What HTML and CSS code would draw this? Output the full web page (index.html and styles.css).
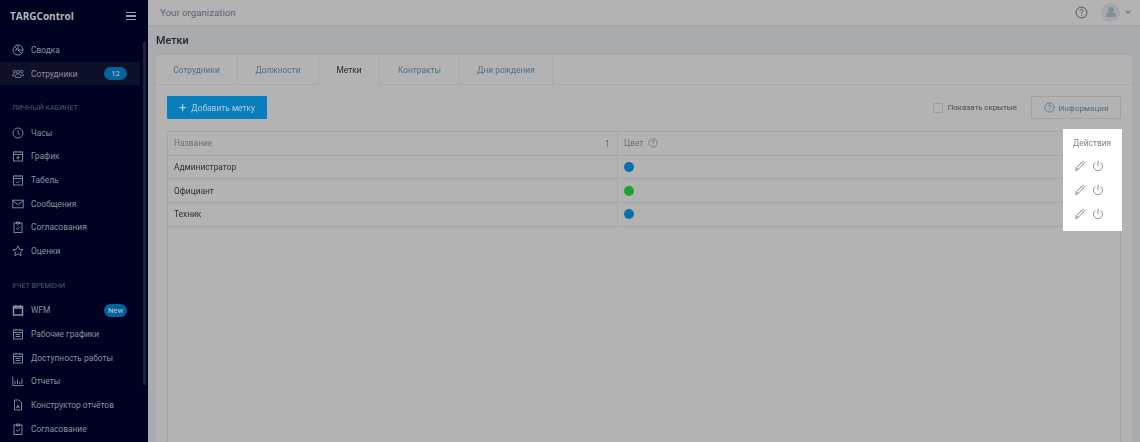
FILE: index.html
```html
<!DOCTYPE html>
<html lang="en">
<head>
    <meta charset="UTF-8">
    <title>TARGControl - Метки</title>
    <link rel="stylesheet" href="styles.css">
</head>
<body>
    <svg class="sprite" width="0" height="0">
        <symbol id="i-pie" viewBox="0 0 12 12"><circle cx="6" cy="6" r="5"/><path d="M6 1v5l3.500 3.500M6 6h5M3 3l2 2-2 2"/></symbol>
        <symbol id="i-team" viewBox="0 0 14 12"><circle cx="7" cy="3.500" r="1.800"/><circle cx="2.800" cy="3" r="1.400"/><circle cx="11.200" cy="3" r="1.400"/><path d="M3.800 10V8c0-1 1-2 3.200-2s3.200 1 3.200 2v2zM3 5.500C1.500 5.500.5 6.500.5 8h2.500M11 5.500c1.500 0 2.500 1 2.500 2.500H11"/></symbol>
        <symbol id="i-clock" viewBox="0 0 12 12"><circle cx="6" cy="6" r="5"/><path d="M6 3v3.200l2 1.300"/></symbol>
        <symbol id="i-cal-plus" viewBox="0 0 12 12"><rect x="1.500" y="2" width="9" height="9"/><path d="M1.500 4.500h9M4 .8v2M8 .8v2M6 6v3.500M4.300 7.700h3.400"/></symbol>
        <symbol id="i-cal-check" viewBox="0 0 12 12"><rect x="1.500" y="2" width="9" height="9"/><path d="M1.500 4.500h9M4 .8v2M8 .8v2M4 7.500l1.500 1.500 2.700-2.700"/></symbol>
        <symbol id="i-mail" viewBox="0 0 12 12"><rect x=".8" y="2.200" width="10.400" height="7.600"/><path d="M.8 3l5.200 3.500L11.200 3"/></symbol>
        <symbol id="i-clip" viewBox="0 0 12 12"><rect x="2" y="2" width="8" height="9.500"/><path d="M4.500 1h3v2h-3zM4 7l1.500 1.500L8 5.700"/></symbol>
        <symbol id="i-star" viewBox="0 0 12 12"><path d="M6 1l1.500 3.300 3.500.4-2.600 2.400.7 3.600L6 8.900l-3.100 1.800.7-3.600L1 4.700l3.500-.4z"/></symbol>
        <symbol id="i-cal" viewBox="0 0 12 12"><rect x="1.500" y="2.500" width="9" height="8.500" class="thick"/><path d="M1.500 4h9M4 1v2M8 1v2" class="thick"/></symbol>
        <symbol id="i-cal-lines" viewBox="0 0 12 12"><rect x="1.500" y="2" width="9" height="9"/><path d="M1.500 4.500h9M4 .8v2M8 .8v2M3.500 6.500h5M3.500 8.500h5"/></symbol>
        <symbol id="i-chart" viewBox="0 0 12 12"><path d="M.8 1.500V10.500h10.700M3 9V6M5.500 9V4.500M7.800 9V6.500M10 9V3.500"/></symbol>
        <symbol id="i-doc" viewBox="0 0 12 12"><path d="M2.500 1h4.500l2.500 2.500V11h-7zM4.500 9l1.300-3 1.300 3M5 8h1.600"/></symbol>
        <symbol id="i-help" viewBox="0 0 12 12"><circle cx="6" cy="6" r="5"/><path d="M4.500 4.700c0-2 3-2 3-.2 0 1.200-1.500 1.200-1.500 2.500M6 8.100v.8"/></symbol>
        <symbol id="i-pen" viewBox="0 0 12 12"><path d="M1.500 10.500l.7-2.700 6-6c.5-.5 1.300-.5 1.800 0s.5 1.300 0 1.800l-6 6zM7.300 2.700l2 2M2.200 7.800l2 2"/></symbol>
        <symbol id="i-power" viewBox="0 0 12 12"><path d="M3.500 2.500a4.500 4.500 0 1 0 5 0M6 .8V6"/></symbol>
    </svg>

    <div class="app">
        <aside class="sidebar">
            <div class="logo-row">
                <span class="logo">TARGControl</span>
                <span class="burger"><i></i><i></i><i></i></span>
            </div>
            <div class="scroll-thumb"></div>
            <nav class="nav">
                <a class="nav-item"><svg class="nav-icon"><use href="#i-pie"/></svg>Сводка</a>
                <a class="nav-item active"><svg class="nav-icon"><use href="#i-team"/></svg>Сотрудники<span class="pill">12</span></a>

                <div class="nav-title">ЛИЧНЫЙ КАБИНЕТ</div>
                <a class="nav-item"><svg class="nav-icon"><use href="#i-clock"/></svg>Часы</a>
                <a class="nav-item"><svg class="nav-icon"><use href="#i-cal-plus"/></svg>График</a>
                <a class="nav-item"><svg class="nav-icon"><use href="#i-cal-check"/></svg>Табель</a>
                <a class="nav-item"><svg class="nav-icon"><use href="#i-mail"/></svg>Сообщения</a>
                <a class="nav-item"><svg class="nav-icon"><use href="#i-clip"/></svg>Согласования</a>
                <a class="nav-item"><svg class="nav-icon"><use href="#i-star"/></svg>Оценки</a>

                <div class="nav-title">УЧЕТ ВРЕМЕНИ</div>
                <a class="nav-item"><svg class="nav-icon"><use href="#i-cal"/></svg>WFM<span class="pill">New</span></a>
                <a class="nav-item"><svg class="nav-icon"><use href="#i-cal-lines"/></svg>Рабочие графики</a>
                <a class="nav-item"><svg class="nav-icon"><use href="#i-cal-lines"/></svg>Доступность работы</a>
                <a class="nav-item"><svg class="nav-icon"><use href="#i-chart"/></svg>Отчеты</a>
                <a class="nav-item"><svg class="nav-icon"><use href="#i-doc"/></svg>Конструктор отчётов</a>
                <a class="nav-item"><svg class="nav-icon"><use href="#i-clip"/></svg>Согласование</a>
            </nav>
        </aside>

        <main class="main">
            <header class="topbar">
                <span class="org">Your organization</span>
                <div class="topbar-right">
                    <svg class="help-icon"><use href="#i-help"/></svg>
                    <span class="avatar"><span class="avatar-head"></span><span class="avatar-body"></span></span>
                    <svg class="chevron" viewBox="0 0 8 5"><path d="M1 1l3 3 3-3"/></svg>
                </div>
            </header>

            <section class="content">
                <h1 class="page-title">Метки</h1>
                <div class="card">
                    <div class="tabs">
                        <a class="tab t-staff">Сотрудники</a>
                        <a class="tab t-posts">Должности</a>
                        <a class="tab t-tags current">Метки</a>
                        <a class="tab t-contracts">Контракты</a>
                        <a class="tab t-birthdays">Дни рождения</a>
                    </div>
                    <div class="card-body">
                        <div class="toolbar">
                            <button class="btn-add"><span class="plus">+</span>Добавить метку</button>
                            <div class="toolbar-right">
                                <label class="check"><span class="box"></span>Показать скрытые</label>
                                <button class="btn-info"><svg class="info-icon"><use href="#i-help"/></svg>Информация</button>
                            </div>
                        </div>
                        <div class="table">
                            <div class="row head">
                                <div class="cell name">Название<span class="sort">↑</span></div>
                                <div class="cell color">Цвет<svg class="th-help"><use href="#i-help"/></svg></div>
                            </div>
                            <div class="row">
                                <div class="cell name">Администратор</div>
                                <div class="cell color"><span class="dot blue"></span></div>
                            </div>
                            <div class="row">
                                <div class="cell name">Официант</div>
                                <div class="cell color"><span class="dot green"></span></div>
                            </div>
                            <div class="row">
                                <div class="cell name">Техник</div>
                                <div class="cell color"><span class="dot blue"></span></div>
                            </div>
                        </div>
                    </div>
                </div>
            </section>
        </main>
    </div>

    <div class="spotlight">
        <div class="spot-head">Действия</div>
        <div class="spot-row"><svg><use href="#i-pen"/></svg><svg><use href="#i-power"/></svg></div>
        <div class="spot-row"><svg><use href="#i-pen"/></svg><svg><use href="#i-power"/></svg></div>
        <div class="spot-row"><svg><use href="#i-pen"/></svg><svg><use href="#i-power"/></svg></div>
    </div>
</body>
</html>
```

FILE: styles.css
```css
html, body {
    margin: 0;
    height: 442px;
    overflow: hidden;
}
body {
    font-family: Roboto, "Liberation Sans", sans-serif;
    font-size: 8.400px;
    background: #a9abaf;
    position: relative;
}
.sprite {
    position: absolute;
}
.app {
    display: flex;
    height: 442px;
    filter: blur(0.3px); /* the reference is a soft, scaled-down capture */
}

/* sidebar */
.sidebar {
    width: 148px;
    flex: none;
    background: #000222;
    color: #8d8e9f;
    position: relative;
}
.logo-row {
    height: 32px;
    display: flex;
    align-items: center;
    padding: 0 12px 0 10px;
    justify-content: space-between;
}
.logo {
    color: #b5b5bb;
    font-family: "Open Sans", sans-serif;
    font-size: 10px;
    font-weight: 700;
}
.burger {
    display: flex;
    flex-direction: column;
    gap: 2px;
    width: 10px;
}
.burger i {
    height: 1.500px;
    background: #9b9ca8;
}
.scroll-thumb {
    position: absolute;
    right: 2px;
    top: 41px;
    width: 3px;
    height: 344px;
    background: #1e2038;
    border-radius: 2px;
}
.nav {
    padding-top: 6px;
    width: 140px;
}
.nav-item {
    display: flex;
    align-items: center;
    height: 23.700px;
    padding-left: 12px;
    padding-right: 13px;
    box-sizing: border-box;
}
.nav-item.active {
    background: #0e1029;
}
.nav-icon {
    width: 12px;
    height: 12px;
    margin-right: 7px;
    flex: none;
}
.nav-icon, .help-icon, .info-icon, .th-help, .spot-row svg {
    fill: none;
    stroke: currentColor;
    stroke-width: 0.900;
}
.thick {
    stroke-width: 1.500;
}
.pill {
    margin-left: auto;
    width: 23px;
    height: 13px;
    border-radius: 7px;
    background: #05639c;
    color: #a0b8c8;
    font-size: 7.500px;
    font-weight: 500;
    display: flex;
    align-items: center;
    justify-content: center;
}
.nav-title {
    font-size: 7.200px;
    color: #54556a;
    padding-left: 12px;
    height: 11px;
    line-height: 11px;
    margin: 16.500px 0 8px;
}

/* top bar */
.main {
    flex: 1;
    min-width: 0;
    display: flex;
    flex-direction: column;
}
.topbar {
    height: 24px;
    background: #b3b3b3;
    border-bottom: 2px solid #a5a6a8;
    display: flex;
    align-items: center;
    justify-content: space-between;
    padding: 0 9px 1px 12px;
    flex: none;
    box-sizing: content-box;
}
.org {
    font-size: 9.700px;
    color: #5c6472;
}
.topbar-right {
    display: flex;
    align-items: center;
    color: #4b4f57;
}
.help-icon {
    width: 13px;
    height: 13px;
    margin-right: 13px;
}
.avatar {
    width: 19px;
    height: 19px;
    border-radius: 50%;
    background: #a6a8ac;
    display: flex;
    flex-direction: column;
    align-items: center;
    justify-content: center;
    margin-right: 5px;
}
.avatar-head {
    width: 6px;
    height: 6px;
    border-radius: 50%;
    background: #7f8d97;
}
.avatar-body {
    width: 10px;
    height: 4px;
    background: #7f8d97;
    border-radius: 2px 2px 0 0;
}
.chevron {
    width: 6px;
    height: 4px;
    fill: none;
    stroke: #3f4248;
    stroke-width: 1.200;
}

/* page */
.content {
    flex: 1;
    padding: 0 7px;
    min-height: 0;
}
.page-title {
    margin: 0;
    height: 27px;
    line-height: 28px;
    padding-left: 1px;
    font-size: 10.800px;
    font-weight: 500;
    color: #23262e;
}
.card {
    background: #b3b3b3;
    border: 1px solid #a8a9ab;
    height: 400px;
    box-sizing: border-box;
}
.tabs {
    display: flex;
    height: 30px;
    border-bottom: 1px solid #a8a9ab;
    box-sizing: border-box;
}
.tab {
    display: flex;
    align-items: center;
    justify-content: center;
    color: #4d6f88;
    border-right: 1px solid #a8a9ab;
    height: 30px;
    box-sizing: border-box;
}
.t-staff {
    width: 82px;
}
.t-posts {
    width: 81px;
}
.t-tags {
    width: 61px;
}
.t-contracts {
    width: 80px;
}
.t-birthdays {
    width: 93px;
}
.tab.current {
    color: #24272e;
    border-bottom: 1px solid #b3b3b3;
}
.card-body {
    padding: 11px 11px 0;
}
.toolbar {
    display: flex;
    justify-content: space-between;
    align-items: center;
    height: 23px;
    margin-bottom: 12px;
}
.btn-add {
    font: inherit;
    width: 100px;
    height: 23px;
    padding: 0;
    border: 0;
    border-radius: 1px;
    background: #0a7dbd;
    color: #b9cfdb;
    display: flex;
    align-items: center;
    justify-content: center;
}
.plus {
    font-size: 13px;
    line-height: 13px;
    margin-right: 5px;
}
.toolbar-right {
    display: flex;
    align-items: center;
}
.check {
    display: flex;
    align-items: center;
    color: #44484f;
    font-size: 7.800px;
    margin-right: 14px;
}
.box {
    width: 8px;
    height: 8px;
    border: 1px solid #9c9da0;
    border-radius: 1px;
    margin-right: 5px;
}
.btn-info {
    font: inherit;
    font-size: 8.100px;
    width: 90px;
    height: 23px;
    padding: 0;
    background: transparent;
    border: 1px solid #a0a1a3;
    border-radius: 2px;
    color: #4d6f88;
    display: flex;
    align-items: center;
    justify-content: center;
}
.info-icon {
    width: 11px;
    height: 11px;
    margin-right: 4px;
}
.table {
    border: 1px solid #a6a7a9;
    border-radius: 2px;
    height: 320px;
}
.row {
    display: grid;
    grid-template-columns: 450px 1fr;
    height: 23.800px;
    border-bottom: 1px solid #a6a7a9;
    box-sizing: border-box;
    color: #2d3039;
}
.row.head {
    color: #6a6e76;
    height: 23.500px;
}
.cell {
    display: flex;
    align-items: center;
    padding: 0 6px;
}
.cell.name {
    border-right: 1px solid #a6a7a9;
    justify-content: space-between;
}
.sort {
    font-size: 12px;
    color: #50535a;
    margin-right: 1px;
}
.th-help {
    width: 10px;
    height: 10px;
    margin-left: 5px;
}
.dot {
    width: 10px;
    height: 10px;
    border-radius: 50%;
}
.dot.blue {
    background: #0a6fae;
}
.dot.green {
    background: #1ba52f;
}

/* highlighted column over the dimmed page */
.spotlight {
    position: absolute;
    left: 1063px;
    top: 129px;
    width: 59px;
    height: 102px;
    background: #fff;
    color: #80838a;
}
.spot-head {
    height: 25px;
    line-height: 28px;
    padding-left: 10px;
    font-size: 8.400px;
    filter: blur(0.3px);
}
.spot-row {
    height: 24px;
    display: flex;
    align-items: center;
    padding-left: 11px;
    gap: 6px;
    filter: blur(0.3px);
}
.spot-row svg {
    width: 12px;
    height: 12px;
}
```
